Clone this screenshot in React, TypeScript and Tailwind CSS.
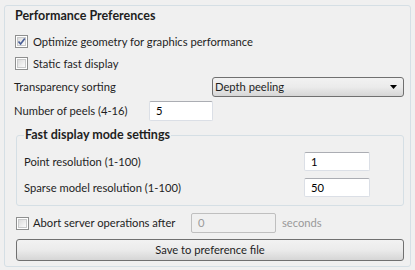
const font = { fontFamily: 'Lato, "Liberation Sans", sans-serif' };

function CheckBox({ checked }: { checked?: boolean }) {
  return (
    <div className="w-[13px] h-[13px] border border-[#8e8f8f] bg-white p-px shrink-0">
      <div className="relative w-full h-full border border-[#c9cacb] bg-gradient-to-br from-[#dcdcdc] to-[#fbfbfb]">
        {checked && (
          <svg viewBox="0 0 9 9" className="absolute -left-px -top-px w-[9px] h-[9px]">
            <path d="M1.5 4.5 L3.6 7 L7.8 1.5" fill="none" stroke="#4a5f97" strokeWidth="1.7" />
          </svg>
        )}
      </div>
    </div>
  );
}

function TextBox({ value, width, height = 20, disabled }: { value: string; width: number; height?: number; disabled?: boolean }) {
  return (
    <div
      className={
        disabled
          ? "flex items-center pl-[6px] border border-[#bfbfbf] rounded-[2px] bg-[#f0f0f0] text-[#9a9a9a]"
          : "flex items-center pl-[6px] border border-[#dbdfe6] border-t-[#abadb3] rounded-[2px] bg-white text-black"
      }
      style={{ width, height }}
    >
      {value}
    </div>
  );
}

export default function App() {
  return (
    <div className="w-[415px] h-[270px] bg-[#f0f0f0] text-[11.2px] leading-4 text-[#1e1e1e] overflow-hidden pt-[5px] pl-[4px] whitespace-nowrap" style={font}>
      <div className="w-[407px] h-[262px] border border-[#d5dfe5] rounded-[3px] flex flex-col pl-[10px] pr-[6px] pt-[2px]">
        <div className="h-4 font-bold text-[12.5px]">Performance Preferences</div>

        <div className="mt-[8px] h-[19px] flex items-center gap-[5px]">
          <CheckBox checked />
          <span>Optimize geometry for graphics performance</span>
        </div>
        <div className="mt-[3px] h-[19px] flex items-center gap-[5px]">
          <CheckBox />
          <span>Static fast display</span>
        </div>

        <div className="mt-[4px] h-[20px] flex items-center justify-between">
          <span className="-ml-px">Transparency sorting</span>
          <div className="w-[192px] h-[20px] flex items-center justify-between pl-[2px] pr-[6px] border border-[#707070] rounded-[3px] bg-gradient-to-b from-[#f2f2f2] via-[#ebebeb] to-[#d6d6d6]">
            <span>Depth peeling</span>
            <svg viewBox="0 0 7 4" className="w-[7px] h-[4px]">
              <path d="M0 0 H7 L3.5 4 Z" fill="#000" />
            </svg>
          </div>
        </div>

        <div className="mt-[4px] h-[20px] flex items-center">
          <span className="-ml-px w-[135px]">Number of peels (4-16)</span>
          <TextBox value="5" width={64} />
        </div>

        <fieldset className="mt-[6px] ml-px border border-[#d5dfe5] rounded-[3px] pl-[7px] pr-[33px] pb-[8px]">
          <legend className="font-bold text-[12.5px] px-px">Fast display mode settings</legend>
          <div className="mt-[9px] h-[19px] flex items-center justify-between">
            <span>Point resolution (1-100)</span>
            <TextBox value="1" width={66} height={19} />
          </div>
          <div className="mt-[7px] h-[19px] flex items-center justify-between">
            <span>Sparse model resolution (1-100)</span>
            <TextBox value="50" width={66} height={19} />
          </div>
        </fieldset>

        <div className="mt-[7px] ml-px h-[20px] flex items-center">
          <CheckBox />
          <span className="ml-[4px] w-[158px]">Abort server operations after</span>
          <TextBox value="0" width={85} disabled />
          <span className="ml-[6px] text-[#9a9a9a]">seconds</span>
        </div>

        <button className="mt-[6px] ml-px h-[22px] border border-[#707070] rounded-[3px] bg-gradient-to-b from-[#f2f2f2] via-[#ebebeb] to-[#d6d6d6] text-center">
          Save to preference file
        </button>
      </div>
    </div>
  );
}
